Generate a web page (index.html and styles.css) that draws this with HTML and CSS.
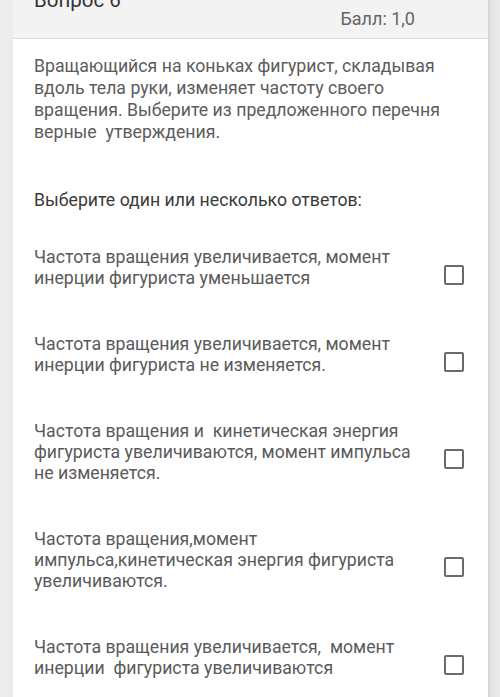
FILE: index.html
```html
<!DOCTYPE html>
<html lang="ru">
<head>
<meta charset="utf-8">
<title>Вопрос 6</title>
<link rel="stylesheet" href="styles.css">
</head>
<body>
<div class="page">
  <div class="card">
    <div class="card-head">
      <div class="q-title">Вопрос 6</div>
      <div class="q-grade">Балл: 1,0</div>
    </div>
    <div class="card-body">
      <p class="q-text">Вращающийся на коньках фигурист, складывая вдоль тела руки, изменяет частоту своего вращения. Выберите из предложенного перечня верные&nbsp; утверждения.</p>
      <p class="prompt">Выберите один или несколько ответов:</p>
      <div class="answers">
        <label class="answer">
          <span class="answer-text">Частота вращения увеличивается, момент инерции фигуриста уменьшается</span>
          <span class="box"></span>
        </label>
        <label class="answer">
          <span class="answer-text">Частота вращения увеличивается, момент инерции фигуриста не изменяется.</span>
          <span class="box"></span>
        </label>
        <label class="answer">
          <span class="answer-text">Частота вращения и&nbsp; кинетическая энергия фигуриста увеличиваются, момент импульса не изменяется.</span>
          <span class="box"></span>
        </label>
        <label class="answer">
          <span class="answer-text">Частота вращения,момент импульса,кинетическая энергия фигуриста увеличиваются.</span>
          <span class="box"></span>
        </label>
        <label class="answer">
          <span class="answer-text">Частота вращения увеличивается,&nbsp; момент инерции&nbsp; фигуриста увеличиваются</span>
          <span class="box"></span>
        </label>
      </div>
    </div>
  </div>
</div>
</body>
</html>
```

FILE: styles.css
```css
html, body {
  margin: 0;
  padding: 0;
  background: #ebebeb;
  font-family: Roboto, "Noto Sans", "Liberation Sans", sans-serif;
  overflow: hidden;
}

.page {
  width: 500px;
  height: 697px;
  overflow: hidden;
  background: linear-gradient(to right, #ececec 0, #ececec 488px, #e2e2e2 489px, #ebebeb 500px);
}

.card {
  margin: -14px 12px 0 13px;
  background: #ffffff;
  box-shadow: 1px 0 2px rgba(0, 0, 0, 0.12);
}

.card-head {
  background: #f3f3f3;
  border-bottom: 1px solid #dedede;
  display: flex;
  justify-content: space-between;
  align-items: flex-start;
  height: 53px;
  padding: 0 0 0 21px;
  box-sizing: border-box;
}

.q-title {
  font-size: 20.5px;
  line-height: 24px;
  color: #333;
  margin-top: 2px;
}

.q-grade {
  font-size: 18px;
  line-height: 24px;
  color: #666;
  margin-top: 21px;
  margin-right: 73px;
}

.card-body {
  padding: 16px 30px 40px 21px;
}

.q-text {
  margin: 0;
  font-size: 17.7px;
  line-height: 22px;
  color: #5c5c5c;
}

.prompt {
  margin: 46px 0 0 0;
  font-size: 17.7px;
  line-height: 22px;
  color: #3a3a3a;
}

.answers {
  display: flex;
  flex-direction: column;
  gap: 45px;
  margin-top: 36px;
}

.answer {
  display: flex;
  align-items: center;
  justify-content: space-between;
}

.answer-text {
  width: 395px;
  font-size: 17.7px;
  line-height: 21px;
  color: #5a5a5a;
}

.box {
  flex: none;
  width: 16px;
  height: 16px;
  border: 2px solid #6a6a6a;
  border-radius: 2px;
  margin-top: 13px;
  margin-right: -6px;
}
```
